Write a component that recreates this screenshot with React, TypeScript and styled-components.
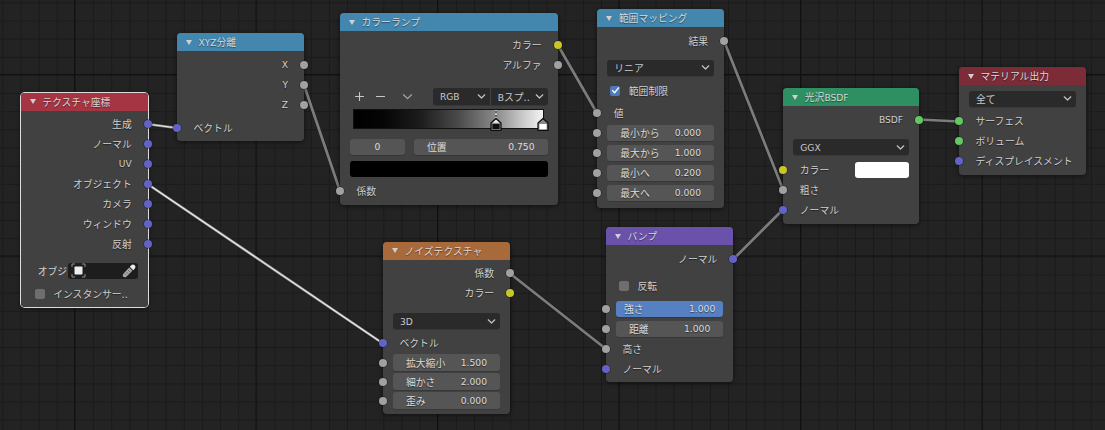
import React from "react";
import styled, { createGlobalStyle } from "styled-components";

const GlobalStyle = createGlobalStyle`
  html, body {
    margin: 0;
    padding: 0;
    background: #232323;
  }
`;

const Canvas = styled.div`
  position: relative;
  width: 1105px;
  height: 430px;
  overflow: hidden;
  font-family: "DejaVu Sans", "Noto Sans CJK JP", sans-serif;
  font-size: 9.8px;
  color: #d0d0d0;
  background-color: #232323;
  background-image:
    linear-gradient(to right, #101010 1px, transparent 1px),
    linear-gradient(to bottom, #101010 1px, transparent 1px),
    linear-gradient(to right, #1a1a1a 1px, transparent 1px),
    linear-gradient(to bottom, #1a1a1a 1px, transparent 1px);
  background-size: 181.5px 181.5px, 181.5px 181.5px, 18.15px 18.15px, 18.15px 18.15px;
  background-position: 74px 74px, 74px 74px, 2.4px 2.4px, 2.4px 2.4px;
`;

const WireLayer = styled.svg`
  position: absolute;
  left: 0;
  top: 0;
`;

const NodeCard = styled.div<{ $x: number; $y: number; $w: number; $selected?: boolean }>`
  position: absolute;
  left: ${(p) => p.$x}px;
  top: ${(p) => p.$y}px;
  width: ${(p) => p.$w}px;
  box-sizing: border-box;
  border-radius: 4px;
  background: rgba(67, 67, 67, 0.96);
  box-shadow: ${(p) =>
    p.$selected
      ? "0 0 0 1px #dcdcdc, 0 1px 5px rgba(0,0,0,.6)"
      : "0 1px 5px rgba(0,0,0,.55)"};
`;

const NodeHeader = styled.div<{ $color: string }>`
  display: flex;
  align-items: center;
  height: 18px;
  padding-left: 9px;
  gap: 6.5px;
  border-radius: 4px 4px 0 0;
  background: ${(p) => p.$color};
  color: #d8d8d8;
  text-shadow: 0 1px 1px rgba(0, 0, 0, 0.45);
`;

const Triangle = styled.span`
  flex: none;
  width: 0;
  height: 0;
  border-left: 3px solid transparent;
  border-right: 3px solid transparent;
  border-top: 5px solid #d0d0d0;
`;

const NodeBody = styled.div<{ $pt?: number; $pb?: number }>`
  display: flex;
  flex-direction: column;
  padding-top: ${(p) => p.$pt ?? 3.5}px;
  padding-bottom: ${(p) => p.$pb ?? 3.5}px;
`;

const SocketRow = styled.div<{ $side: "left" | "right"; $h?: number; $mt?: number; $field?: boolean }>`
  position: relative;
  display: flex;
  align-items: center;
  flex: none;
  height: ${(p) => p.$h ?? 20}px;
  margin-top: ${(p) => p.$mt ?? 0}px;
  padding: ${(p) => (p.$field ? "0 10px" : p.$side === "left" ? "0 10px 0 16.5px" : "0 16px 0 10px")};
  justify-content: ${(p) => (p.$side === "left" ? "flex-start" : "flex-end")};
  text-shadow: 0 1px 1px rgba(0, 0, 0, 0.5);
`;

const Socket = styled.span<{ $side: "left" | "right"; $color: string }>`
  position: absolute;
  top: 50%;
  ${(p) => p.$side}: -4px;
  width: 8px;
  height: 8px;
  margin-top: -4px;
  border-radius: 50%;
  background: ${(p) => p.$color};
  box-shadow: 0 0 0 0.5px rgba(20, 20, 20, 0.8);
`;

const ControlRow = styled.div<{ $mt?: number; $h?: number }>`
  display: flex;
  align-items: stretch;
  height: ${(p) => p.$h ?? 16}px;
  margin-top: ${(p) => p.$mt ?? 0}px;
  padding: 0 10px;
`;

const Dropdown = styled.div<{ $flat?: "left" | "right" }>`
  flex: 1;
  display: flex;
  align-items: center;
  justify-content: space-between;
  padding: 0 4px 0 7px;
  min-width: 0;
  background: #2a2a2a;
  border-radius: ${(p) =>
    p.$flat === "right" ? "3px 0 0 3px" : p.$flat === "left" ? "0 3px 3px 0" : "3px"};
  box-shadow: 0 1px 0 rgba(0, 0, 0, 0.15);
  color: #c8c8c8;
`;

const SplitDropdown = styled(Dropdown)`
  margin-left: 1px;
`;

const NumberField = styled.div<{ $active?: boolean }>`
  flex: 1;
  display: flex;
  align-items: center;
  justify-content: space-between;
  box-sizing: border-box;
  height: 16.5px;
  padding: 0 ${(p) => (p.$active ? 8 : 13)}px;
  background: ${(p) => (p.$active ? "#5680c2" : "#555555")};
  border-radius: 3px;
  box-shadow: 0 1px 0 rgba(0, 0, 0, 0.15);
  color: #dcdcdc;
`;

const NumberValue = styled.span`
  font-size: 9.2px;
`;

const LatinText = styled.span`
  font-size: 9.1px;
`;

const CheckRow = styled.div<{ $mt?: number; $pl?: number }>`
  display: flex;
  align-items: center;
  gap: 8.5px;
  height: 20px;
  margin-top: ${(p) => p.$mt ?? 0}px;
  padding-left: ${(p) => p.$pl ?? 13}px;
  text-shadow: 0 1px 1px rgba(0, 0, 0, 0.5);
`;

const CheckBox = styled.span<{ $checked?: boolean }>`
  flex: none;
  display: flex;
  align-items: center;
  justify-content: center;
  width: 10px;
  height: 10px;
  border-radius: 2px;
  background: ${(p) => (p.$checked ? "#4f79bd" : "#6e6e6e")};
`;

const PickerRow = styled.div<{ $mt?: number }>`
  display: flex;
  align-items: center;
  height: 16.6px;
  margin-top: ${(p) => p.$mt ?? 0}px;
  padding: 0 10px 0 17px;
`;

const PickerLabel = styled.span`
  flex: none;
  width: 30px;
  overflow: hidden;
  white-space: nowrap;
`;

const PickerField = styled.div`
  flex: 1;
  display: flex;
  align-items: center;
  justify-content: space-between;
  align-self: stretch;
  padding: 0 2px 0 3px;
  background: #1d1d1d;
  border-radius: 3px;
`;

const RampTools = styled.div`
  flex: none;
  display: flex;
  align-items: center;
  width: 83px;
  padding-left: 4px;
  gap: 9.5px;
  box-sizing: border-box;
`;

const RampTrack = styled.div`
  position: relative;
  height: 18px;
  margin: 5px 14.5px 0 14px;
  box-shadow: 0 0 0 1px #111;
  background: linear-gradient(
    to right,
    #000 0%,
    #050505 15%,
    #1c1c1c 35%,
    #4a4a4a 55%,
    #8a8a8a 75%,
    #c4c4c4 88%,
    #f4f4f4 100%
  );
`;

const MarkerPin = styled.svg<{ $at: number }>`
  position: absolute;
  left: ${(p) => p.$at}%;
  top: 0;
  margin-left: -6px;
  overflow: visible;
`;

const RampFields = styled(ControlRow)`
  gap: 9px;
`;

const StopIndex = styled(NumberField)`
  flex: none;
  width: 55px;
  justify-content: center;
  padding: 0;
`;

const ColorBar = styled.div<{ $color: string }>`
  flex: 1;
  background: ${(p) => p.$color};
  border-radius: 3px;
`;

const Swatch = styled.div`
  flex: none;
  width: 54px;
  height: 16px;
  margin-left: auto;
  background: #fff;
  border-radius: 3px;
`;

const COLORS = {
  vector: "#6363c7",
  value: "#a1a1a1",
  color: "#c7c729",
  shader: "#63c763",
};

type SocketKind = keyof typeof COLORS;

const Chevron = () => (
  <svg width="9" height="7" viewBox="0 0 9 7" fill="none">
    <path d="M1.2 1.8 L4.5 5 L7.8 1.8" stroke="#c4c4c4" strokeWidth="1.2" strokeLinecap="round" strokeLinejoin="round" />
  </svg>
);

const PlusIcon = () => (
  <svg width="11" height="11" viewBox="0 0 11 11" fill="none">
    <path d="M5.5 1.5 V9.5 M1.5 5.5 H9.5" stroke="#c8c8c8" strokeWidth="1.1" strokeLinecap="round" />
  </svg>
);

const MinusIcon = () => (
  <svg width="11" height="11" viewBox="0 0 11 11" fill="none">
    <path d="M1.5 5.5 H9.5" stroke="#c8c8c8" strokeWidth="1.1" strokeLinecap="round" />
  </svg>
);

const ToolChevronIcon = styled.svg`
  margin-left: 7px;
`;

const ToolChevron = () => (
  <ToolChevronIcon width="11" height="11" viewBox="0 0 11 11" fill="none">
    <path d="M1.5 3.8 L5.5 7.6 L9.5 3.8" stroke="#a8a8a8" strokeWidth="1.2" strokeLinecap="round" strokeLinejoin="round" />
  </ToolChevronIcon>
);

const CheckMark = () => (
  <svg width="9" height="9" viewBox="0 0 9 9" fill="none">
    <path d="M1.6 4.6 L3.6 6.8 L7.5 1.9" stroke="#fff" strokeWidth="1.4" strokeLinecap="round" strokeLinejoin="round" />
  </svg>
);

const ObjectIcon = () => (
  <svg width="15" height="15" viewBox="0 0 15 15" fill="none">
    <path d="M1 4 V1 H4 M11 1 H14 V4 M14 11 V14 H11 M4 14 H1 V11" stroke="#8e8e8e" strokeWidth="1" />
    <rect x="3.5" y="3.5" width="8" height="8" rx="0.8" fill="#ececec" />
  </svg>
);

const EyedropperIcon = () => (
  <svg width="14" height="14" viewBox="0 0 14 14" fill="none">
    <path d="M9 1.6 C10 .3 11.6 .2 12.7 1.3 C13.8 2.4 13.7 4 12.4 5 L11.2 6.2 L7.8 2.8 Z" fill="#ececec" />
    <path d="M7.2 3.6 L10.4 6.8 L4.6 12.4 C3.6 13.3 2.6 13.4 1.8 13.1 L0.9 12.2 C0.6 11.4 .8 10.4 1.6 9.4 Z" fill="#a8a8a8" />
    <path d="M6 6 L8 8 M4.4 7.8 L6.2 9.6 M2.8 9.6 L4.4 11.2" stroke="#5c5c5c" strokeWidth="0.8" />
  </svg>
);

const RampMarker = ({ at, fill, active }: { at: number; fill: string; active?: boolean }) => (
  <MarkerPin $at={at} width="12" height="22" viewBox="0 0 12 22">
    {active && (
      <>
        <path d="M6 0 V8" stroke="#fff" strokeWidth="1" />
        <path d="M6 1 V8" stroke="#000" strokeWidth="1" strokeDasharray="2 2" />
      </>
    )}
    <path d="M1 13 L6 8.5 L11 13 V20.5 H1 Z" fill="#8a8a8a" stroke="#0c0c0c" strokeWidth="1.2" strokeLinejoin="round" />
    {active && <path d="M2.5 12.8 L6 9.8 L9.5 12.8 Z" fill="#f2f2f2" />}
    <rect x="2.4" y="14" width="7.2" height="5.2" fill={fill} />
  </MarkerPin>
);

const Wire = ({ d, selected }: { d: string; selected?: boolean }) => (
  <>
    <path d={d} stroke="rgba(25,25,25,.7)" strokeWidth="3.8" fill="none" strokeLinecap="round" />
    <path d={d} stroke={selected ? "#8f8f8f" : "#7c7c7c"} strokeWidth="2.7" fill="none" strokeLinecap="round" />
    {selected && <path d={d} stroke="#ececec" strokeWidth="1.2" fill="none" strokeLinecap="round" />}
  </>
);

const Output = ({ kind, children }: { kind: SocketKind; children: React.ReactNode }) => (
  <SocketRow $side="right">
    {children}
    <Socket $side="right" $color={COLORS[kind]} />
  </SocketRow>
);

const Input = ({ kind, mt, children }: { kind: SocketKind; mt?: number; children: React.ReactNode }) => (
  <SocketRow $side="left" $mt={mt}>
    <Socket $side="left" $color={COLORS[kind]} />
    {children}
  </SocketRow>
);

const FieldInput = ({
  label,
  value,
  h,
  mt,
  active,
}: {
  label: string;
  value: string;
  h?: number;
  mt?: number;
  active?: boolean;
}) => (
  <SocketRow $side="left" $field $h={h} $mt={mt}>
    <Socket $side="left" $color={COLORS.value} />
    <NumberField $active={active}>
      <span>{label}</span>
      <NumberValue>{value}</NumberValue>
    </NumberField>
  </SocketRow>
);

const Select = ({ mt, label }: { mt: number; label: React.ReactNode }) => (
  <ControlRow $mt={mt}>
    <Dropdown>
      <span>{label}</span>
      <Chevron />
    </Dropdown>
  </ControlRow>
);

const Title = ({ color, children }: { color: string; children: React.ReactNode }) => (
  <NodeHeader $color={color}>
    <Triangle />
    <span>{children}</span>
  </NodeHeader>
);

export default function App() {
  return (
    <Canvas>
      <GlobalStyle />

      <WireLayer width="1105" height="430" viewBox="0 0 1105 430">
        <Wire d="M147 124 L177 128" selected />
        <Wire d="M147.5 184 L383 343.5" selected />
        <Wire d="M304 85 L340 191" />
        <Wire d="M557.5 44.5 L597 113" />
        <Wire d="M724 41 L783 189.5" />
        <Wire d="M510 273.5 L606 349" />
        <Wire d="M733 259.5 L783 209.5" />
        <Wire d="M919 119.5 L959 121.5" />
      </WireLayer>

      <NodeCard $x={20.7} $y={92.7} $w={127} $selected>
        <Title color="#a53543">テクスチャ座標</Title>
        <NodeBody>
          <Output kind="vector">生成</Output>
          <Output kind="vector">ノーマル</Output>
          <Output kind="vector"><LatinText>UV</LatinText></Output>
          <Output kind="vector">オブジェクト</Output>
          <Output kind="vector">カメラ</Output>
          <Output kind="vector">ウィンドウ</Output>
          <Output kind="vector">反射</Output>
          <PickerRow $mt={8.4}>
            <PickerLabel>オブジ</PickerLabel>
            <PickerField>
              <ObjectIcon />
              <EyedropperIcon />
            </PickerField>
          </PickerRow>
          <CheckRow $mt={4.6} $pl={14}>
            <CheckBox />
            <span>インスタンサー..</span>
          </CheckRow>
        </NodeBody>
      </NodeCard>

      <NodeCard $x={177} $y={33.3} $w={127}>
        <Title color="#4387ae"><LatinText>XYZ</LatinText>分離</Title>
        <NodeBody $pb={3.4}>
          <Output kind="value"><LatinText>X</LatinText></Output>
          <Output kind="value"><LatinText>Y</LatinText></Output>
          <Output kind="value"><LatinText>Z</LatinText></Output>
          <Input kind="vector" mt={3}>ベクトル</Input>
        </NodeBody>
      </NodeCard>

      <NodeCard $x={340} $y={13} $w={217.5}>
        <Title color="#4387ae">カラーランプ</Title>
        <NodeBody $pb={4}>
          <Output kind="color">カラー</Output>
          <Output kind="value">アルファ</Output>
          <ControlRow $mt={13.5} $h={17}>
            <RampTools>
              <PlusIcon />
              <MinusIcon />
              <ToolChevron />
            </RampTools>
            <Dropdown $flat="right">
              <LatinText>RGB</LatinText>
              <Chevron />
            </Dropdown>
            <SplitDropdown $flat="left">
              <span><LatinText>B</LatinText>スプ..</span>
              <Chevron />
            </SplitDropdown>
          </ControlRow>
          <RampTrack>
            <RampMarker at={75} fill="#111" active />
            <RampMarker at={100} fill="#fff" />
          </RampTrack>
          <RampFields $mt={10.5}>
            <StopIndex><NumberValue>0</NumberValue></StopIndex>
            <NumberField>
              <span>位置</span>
              <NumberValue>0.750</NumberValue>
            </NumberField>
          </RampFields>
          <ControlRow $mt={6.5}>
            <ColorBar $color="#000" />
          </ControlRow>
          <Input kind="value" mt={4}>係数</Input>
        </NodeBody>
      </NodeCard>

      <NodeCard $x={597.3} $y={9.3} $w={126.7}>
        <Title color="#4387ae">範囲マッピング</Title>
        <NodeBody $pb={5}>
          <Output kind="value">結果</Output>
          <Select mt={9} label="リニア" />
          <CheckRow $mt={5}>
            <CheckBox $checked><CheckMark /></CheckBox>
            <span>範囲制限</span>
          </CheckRow>
          <Input kind="value" mt={2}>値</Input>
          <FieldInput label="最小から" value="0.000" />
          <FieldInput label="最大から" value="1.000" />
          <FieldInput label="最小へ" value="0.200" />
          <FieldInput label="最大へ" value="0.000" />
        </NodeBody>
      </NodeCard>

      <NodeCard $x={783.3} $y={88} $w={135.7}>
        <Title color="#2e8f63">光沢<LatinText>BSDF</LatinText></Title>
        <NodeBody $pb={3.7}>
          <Output kind="shader"><LatinText>BSDF</LatinText></Output>
          <Select mt={9.7} label={<LatinText>GGX</LatinText>} />
          <Input kind="color" mt={4.7}>
            カラー
            <Swatch />
          </Input>
          <Input kind="value">粗さ</Input>
          <Input kind="vector">ノーマル</Input>
        </NodeBody>
      </NodeCard>

      <NodeCard $x={959} $y={67.3} $w={126.7}>
        <Title color="#7c2c36">マテリアル出力</Title>
        <NodeBody $pt={5.7} $pb={4}>
          <Select mt={0} label="全て" />
          <Input kind="shader" mt={4.3}>サーフェス</Input>
          <Input kind="shader">ボリューム</Input>
          <Input kind="vector">ディスプレイスメント</Input>
        </NodeBody>
      </NodeCard>

      <NodeCard $x={383} $y={241.7} $w={127}>
        <Title color="#a8693b">ノイズテクスチャ</Title>
        <NodeBody $pb={3.5}>
          <Output kind="value">係数</Output>
          <Output kind="color">カラー</Output>
          <Select mt={10} label={<LatinText>3D</LatinText>} />
          <Input kind="vector" mt={4}>ベクトル</Input>
          <FieldInput label="拡大縮小" value="1.500" h={19} />
          <FieldInput label="細かさ" value="2.000" h={19} />
          <FieldInput label="歪み" value="0.000" h={19} />
        </NodeBody>
      </NodeCard>

      <NodeCard $x={606} $y={227.3} $w={127.3}>
        <Title color="#6a52ab">バンプ</Title>
        <NodeBody $pb={3}>
          <Output kind="vector">ノーマル</Output>
          <CheckRow $mt={7.7}>
            <CheckBox />
            <span>反転</span>
          </CheckRow>
          <FieldInput label="強さ" value="1.000" mt={2.3} active />
          <FieldInput label="距離" value="1.000" />
          <Input kind="value">高さ</Input>
          <Input kind="vector">ノーマル</Input>
        </NodeBody>
      </NodeCard>
    </Canvas>
  );
}
